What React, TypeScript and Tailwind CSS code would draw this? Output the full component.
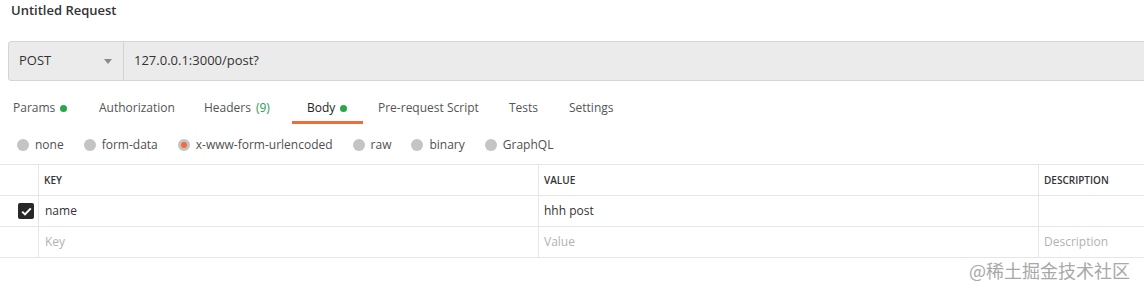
const font = { fontFamily: '"Open Sans", "Noto Sans", sans-serif' };

const tabs = [
  { label: "Params", dot: true, w: "w-[86px]" },
  { label: "Authorization", w: "w-[105px]" },
  { label: "Headers", count: "(9)", w: "w-[88px]" },
  { label: "Body", dot: true, active: true, w: "w-[86px] pl-[15px]" },
  { label: "Pre-request Script", w: "w-[131px]" },
  { label: "Tests", w: "w-[60px]" },
  { label: "Settings", w: "w-[80px]" },
];

const radios = [
  { label: "none" },
  { label: "form-data" },
  { label: "x-www-form-urlencoded", on: true },
  { label: "raw" },
  { label: "binary" },
  { label: "GraphQL" },
];

const Radio = ({ on }: { on?: boolean }) => (
  <span className="w-[12px] h-[12px] rounded-full bg-[#c4c4c4] flex items-center justify-center">
    {on && <span className="w-[6px] h-[6px] rounded-full bg-[#f26b3a]" />}
  </span>
);

export default function App() {
  return (
    <div className="w-[1144px] h-[294px] bg-white overflow-hidden relative text-[12px] text-[#505050]" style={font}>
      {/* title */}
      <div className="pl-[11px] pt-[1px] h-[41px] text-[13px] font-semibold text-[#333]">Untitled Request</div>

      {/* url bar */}
      <div className="ml-[8px] w-[1150px] h-[40px] flex bg-[#ebebeb] border border-[#d4d4d4] rounded-l-[3px]">
        <div className="w-[115px] flex items-center justify-between pl-[10px] pr-[11px] border-r border-[#d4d4d4]">
          <span className="text-[13px] text-[#333]">POST</span>
          <svg width="8" height="5" viewBox="0 0 8 5"><path d="M0 0h8L4 5z" fill="#8a8a8a" /></svg>
        </div>
        <div className="flex items-center pl-[10px] text-[13px] text-[#333]">127.0.0.1:3000/post?</div>
      </div>

      {/* tabs */}
      <div className="flex pl-[13px] mt-[18px] h-[27px]">
        {tabs.map((t) => (
          <div key={t.label} className={`relative flex items-start ${t.w}`}>
            <span className={`text-[12px] flex items-center gap-[5px] ${t.active ? "text-[#222]" : "text-[#555]"}`}>
              {t.label}
              {t.count && <span className="text-[#2a9d52]">{t.count}</span>}
              {t.dot && <span className="w-[7px] h-[7px] rounded-full bg-[#28a745]" />}
            </span>
            {t.active && <span className="absolute left-0 w-[71px] top-[22px] h-[3px] bg-[#f26b3a]" />}
          </div>
        ))}
      </div>

      {/* body types */}
      <div className="flex items-center pl-[17px] h-[32px] mt-[3px]">
        {radios.map((r) => (
          <div key={r.label} className="flex items-center gap-[6px] mr-[20px]">
            <Radio on={r.on} />
            <span className="text-[12px] text-[#505050]">{r.label}</span>
          </div>
        ))}
      </div>

      {/* table */}
      <div className="mt-[3px] border-t border-[#e6e6e6]">
        <div className="flex h-[31px] border-b border-[#e6e6e6]">
          <div className="w-[39px] border-r border-[#e6e6e6]" />
          <div className="w-[500px] border-r border-[#e6e6e6] flex items-center pl-[5px] text-[10px] font-semibold text-[#333]">KEY</div>
          <div className="w-[500px] border-r border-[#e6e6e6] flex items-center pl-[5px] text-[10px] font-semibold text-[#333]">VALUE</div>
          <div className="flex-1 flex items-center pl-[5px] text-[10px] font-semibold text-[#333]">DESCRIPTION</div>
        </div>
        <div className="flex h-[31px] border-b border-[#e6e6e6]">
          <div className="w-[39px] border-r border-[#e6e6e6] flex items-center justify-end pr-[4px]">
            <span className="w-[16px] h-[16px] rounded-[2px] bg-[#282828] flex items-center justify-center">
              <svg width="11" height="9" viewBox="0 0 11 9"><path d="M1.2 4.6l2.8 2.8 5.8-6" stroke="#fff" strokeWidth="2" fill="none" /></svg>
            </span>
          </div>
          <div className="w-[500px] border-r border-[#e6e6e6] flex items-center pl-[6px] text-[12px] text-[#333]">name</div>
          <div className="w-[500px] border-r border-[#e6e6e6] flex items-center pl-[5px] text-[12px] text-[#333]">hhh post</div>
          <div className="flex-1" />
        </div>
        <div className="flex h-[31px] border-b border-[#e6e6e6]">
          <div className="w-[39px] border-r border-[#e6e6e6]" />
          <div className="w-[500px] border-r border-[#e6e6e6] flex items-center pl-[6px] text-[12px] text-[#b3b3b3]">Key</div>
          <div className="w-[500px] border-r border-[#e6e6e6] flex items-center pl-[5px] text-[12px] text-[#b3b3b3]">Value</div>
          <div className="flex-1 flex items-center pl-[5px] text-[12px] text-[#b3b3b3]">Description</div>
        </div>
      </div>

      {/* watermark */}
      <div
        className="absolute left-[969px] top-[257px] text-[18px] text-[#a8a8a8]"
        style={{ fontFamily: '"Noto Sans CJK SC", "Noto Sans", sans-serif' }}
      >
        @稀土掘金技术社区
      </div>
    </div>
  );
}
